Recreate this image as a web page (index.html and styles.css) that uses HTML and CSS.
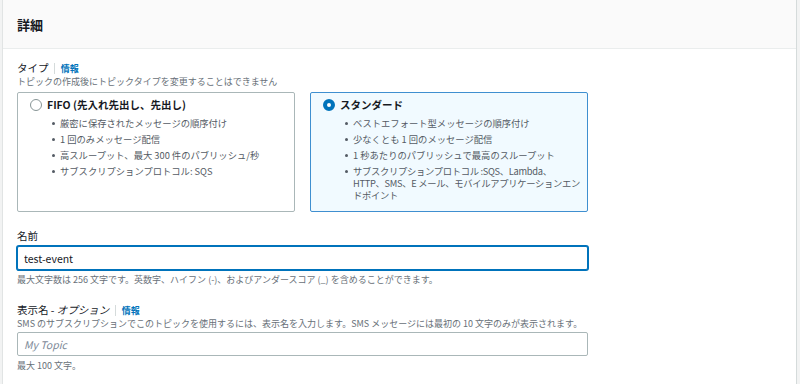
FILE: index.html
```html
<!DOCTYPE html>
<html lang="ja">
<head>
  <meta charset="UTF-8">
  <title>詳細</title>
  <link rel="stylesheet" href="styles.css">
</head>
<body>

  <div class="panel">
    <div class="panel-header">
      <h2>詳細</h2>
    </div>

    <div class="panel-body">
      <div class="field">
        <div class="field-label">タイプ <span class="info-link">情報</span></div>
        <div class="field-desc">トピックの作成後にトピックタイプを変更することはできません</div>

        <div class="tiles">
          <div class="tile">
            <div class="tile-title"><span class="radio"></span>FIFO (先入れ先出し、先出し)</div>
            <ul>
              <li>厳密に保存されたメッセージの順序付け</li>
              <li>1 回のみメッセージ配信</li>
              <li>高スループット、最大 300 件のパブリッシュ/秒</li>
              <li>サブスクリプションプロトコル: SQS</li>
            </ul>
          </div>
          <div class="tile selected">
            <div class="tile-title"><span class="radio"></span>スタンダード</div>
            <ul>
              <li>ベストエフォート型メッセージの順序付け</li>
              <li>少なくとも 1 回のメッセージ配信</li>
              <li>1 秒あたりのパブリッシュで最高のスループット</li>
              <li class="tight">サブスクリプションプロトコル :SQS、Lambda、HTTP、SMS、E メール、モバイルアプリケーションエンドポイント</li>
            </ul>
          </div>
        </div>
      </div>

      <div class="field">
        <div class="field-label">名前</div>
        <input class="text-input focused" type="text" value="test-event">
        <div class="field-hint">最大文字数は 256 文字です。英数字、ハイフン (-)、およびアンダースコア (_) を含めることができます。</div>
      </div>

      <div class="field">
        <div class="field-label">表示名 - <em>オプション</em> <span class="info-link">情報</span></div>
        <div class="field-desc">SMS のサブスクリプションでこのトピックを使用するには、表示名を入力します。SMS メッセージには最初の 10 文字のみが表示されます。</div>
        <input class="text-input" type="text" placeholder="My Topic">
        <div class="field-hint">最大 100 文字。</div>
      </div>
    </div>
  </div>

</body>
</html>
```

FILE: styles.css
```css
body {
  margin: 0;
  background: #f2f3f3;
  font-family: "Noto Sans CJK JP", "Noto Sans", sans-serif;
  color: #16191f;
}

.panel {
  margin-left: 2px;
  width: 793px;
  min-height: 420px;
  background: #fff;
  border-left: 1px solid #e1e4e4;
  border-right: 1px solid #d5dbdb;
}

.panel-header {
  height: 48px;
  background: #fafafa;
  border-bottom: 1px solid #eaeded;
  padding: 0 14px;
  display: flex;
  align-items: center;
}

.panel-header h2 {
  margin: 2px 0 0;
  font-size: 13px;
  font-weight: bold;
  line-height: 18px;
}

.panel-body {
  padding: 11px 14px 0;
  width: 571px;
}

.field {
  margin-bottom: 16px;
}

.field-label {
  font-size: 10.5px;
  line-height: 16px;
}

.field-label em {
  font-style: italic;
}

.info-link {
  display: inline-block;
  margin-left: 3px;
  padding-left: 6px;
  border-left: 1px solid #d5dbdb;
  line-height: 11px;
  font-size: 9px;
  font-weight: bold;
  color: #0073bb;
}

.field-desc,
.field-hint {
  font-size: 9px;
  line-height: 12px;
  color: #687078;
  white-space: nowrap;
}

.field-hint {
  margin-top: 4px;
}

.tiles {
  display: grid;
  grid-template-columns: 1fr 1fr;
  gap: 15px;
  margin-top: 4px;
}

.tile {
  box-sizing: border-box;
  height: 120px;
  border: 1px solid #aab7b8;
  border-radius: 2px;
  padding: 4px 4px 0 12px;
}

.tile.selected {
  border-color: #3f8fd0;
  background: #f1faff;
}

.tile-title {
  display: flex;
  align-items: center;
  gap: 5px;
  font-size: 10.5px;
  font-weight: bold;
  line-height: 16px;
}

.radio {
  width: 10px;
  height: 10px;
  border: 1px solid #879596;
  border-radius: 50%;
  background: #fff;
}

.selected .radio {
  width: 4px;
  height: 4px;
  border: 4px solid #0073bb;
}

.tile ul {
  list-style: none;
  margin: 4px 0 0;
  padding-left: 30px;
}

.tile li {
  position: relative;
  font-size: 9.3px;
  line-height: 12px;
  color: #545b64;
  margin-bottom: 4px;
}

.tile li.tight {
  letter-spacing: -0.3px;
}

.tile li::before {
  content: "";
  position: absolute;
  left: -8px;
  top: 5px;
  width: 3px;
  height: 3px;
  border-radius: 50%;
  background: #545b64;
}

.text-input {
  display: block;
  box-sizing: border-box;
  width: 100%;
  height: 24px;
  margin-top: 2px;
  padding: 0 6px;
  border: 1px solid #aab7b8;
  border-radius: 2px;
  font-family: inherit;
  font-size: 10.5px;
  color: #16191f;
  outline: none;
}

.text-input.focused {
  border-color: #0073bb;
  box-shadow: 0 0 0 1px #0073bb;
}

.text-input::placeholder {
  color: #7d8998;
  font-style: italic;
}
```
